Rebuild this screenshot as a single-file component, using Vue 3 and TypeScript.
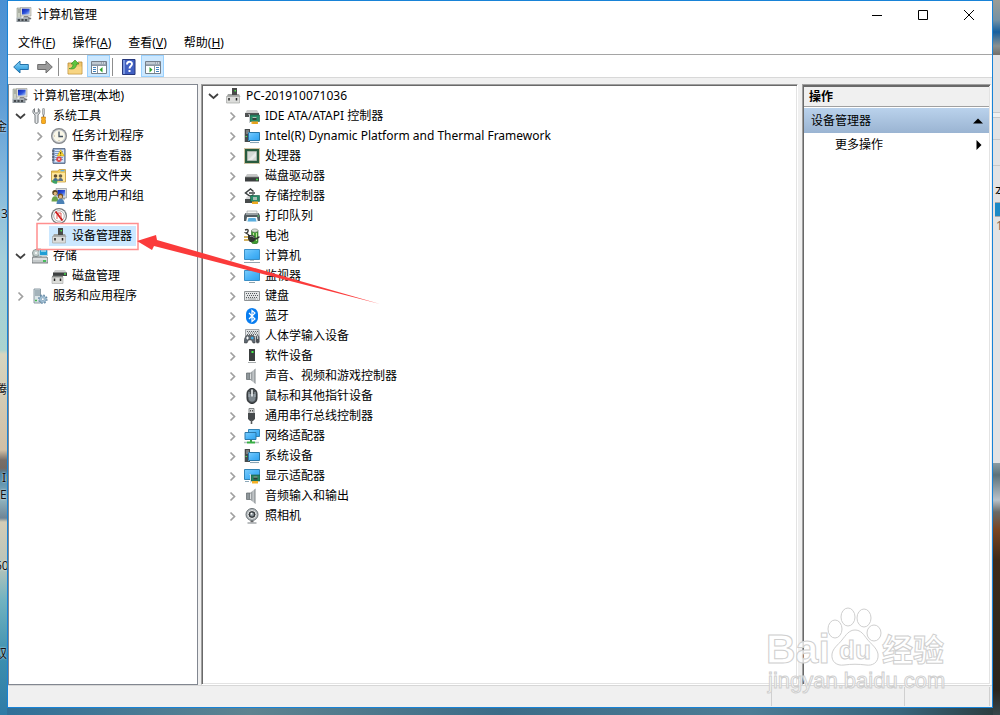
<script setup lang="ts">
interface TreeNode {
  label: string
  icon: string
  level: number
  state?: 'open' | 'closed'
  selected?: boolean
}

const menus = [
  { label: '文件', key: 'F' },
  { label: '操作', key: 'A' },
  { label: '查看', key: 'V' },
  { label: '帮助', key: 'H' },
]

const consoleTree: TreeNode[] = [
  { label: '计算机管理(本地)', icon: 'i-manage', level: 0 },
  { label: '系统工具', icon: 'i-tools', level: 1, state: 'open' },
  { label: '任务计划程序', icon: 'i-clock', level: 2, state: 'closed' },
  { label: '事件查看器', icon: 'i-event', level: 2, state: 'closed' },
  { label: '共享文件夹', icon: 'i-share', level: 2, state: 'closed' },
  { label: '本地用户和组', icon: 'i-users', level: 2, state: 'closed' },
  { label: '性能', icon: 'i-perf', level: 2, state: 'closed' },
  { label: '设备管理器', icon: 'i-device', level: 2, selected: true },
  { label: '存储', icon: 'i-storage', level: 1, state: 'open' },
  { label: '磁盘管理', icon: 'i-diskmgr', level: 2 },
  { label: '服务和应用程序', icon: 'i-services', level: 1, state: 'closed' },
]

const deviceNames: [string, string][] = [
  ['IDE ATA/ATAPI 控制器', 'i-ide'],
  ['Intel(R) Dynamic Platform and Thermal Framework', 'i-system'],
  ['处理器', 'i-cpu'],
  ['磁盘驱动器', 'i-disk'],
  ['存储控制器', 'i-storctl'],
  ['打印队列', 'i-printer'],
  ['电池', 'i-battery'],
  ['计算机', 'i-computer'],
  ['监视器', 'i-monitor'],
  ['键盘', 'i-keyboard'],
  ['蓝牙', 'i-bluetooth'],
  ['人体学输入设备', 'i-hid'],
  ['软件设备', 'i-software'],
  ['声音、视频和游戏控制器', 'i-speaker'],
  ['鼠标和其他指针设备', 'i-mouse'],
  ['通用串行总线控制器', 'i-usb'],
  ['网络适配器', 'i-network'],
  ['系统设备', 'i-system'],
  ['显示适配器', 'i-display'],
  ['音频输入和输出', 'i-speaker'],
  ['照相机', 'i-camera'],
]

const deviceTree: TreeNode[] = [
  { label: 'PC-201910071036', icon: 'i-device', level: 0, state: 'open' },
  ...deviceNames.map(([label, icon]): TreeNode => ({ label, icon, level: 1, state: 'closed' })),
]
</script>

<template>
  <div class="desktop">
    <svg class="sprite" aria-hidden="true">
      <defs>
        <linearGradient id="g-screen" x1="0" y1="0" x2="1" y2="1">
          <stop offset="0" stop-color="#7ccdfd" /><stop offset=".5" stop-color="#4db5f8" /><stop offset="1" stop-color="#2fa2ee" />
        </linearGradient>
        <linearGradient id="g-back" x1="0" y1="0" x2="0" y2="1">
          <stop offset="0" stop-color="#8fd8fb" /><stop offset="1" stop-color="#1b8fd6" />
        </linearGradient>
        <linearGradient id="g-navy" x1="0" y1="0" x2="1" y2="1">
          <stop offset="0" stop-color="#0a1fae" /><stop offset=".55" stop-color="#2f55dc" /><stop offset="1" stop-color="#b5d0fb" />
        </linearGradient>
        <linearGradient id="g-cone" x1="0" y1="0" x2="1" y2="0">
          <stop offset="0" stop-color="#777d80" /><stop offset=".6" stop-color="#c6cacc" /><stop offset="1" stop-color="#7d8386" />
        </linearGradient>
        <symbol id="i-down" viewBox="0 0 16 16"><path d="M4 6l4.500 4 4.500-4" fill="none" stroke="#404040" stroke-width="1.700" /></symbol>
        <symbol id="i-right" viewBox="0 0 16 16"><path d="M6.500 4.500l4 4-4 4" fill="none" stroke="#a0a0a0" stroke-width="1.700" /></symbol>
        <symbol id="i-manage" viewBox="0 0 16 16">
          <path d="M1 1h4v10H1z" fill="#c9cec2" stroke="#8a9088" stroke-width=".6" /><path d="M2 3h2M2 5h2" stroke="#70766c" stroke-width=".7" />
          <path d="M4.500 .5h10.500v8.500H4.500z" fill="#dcdcd5" stroke="#9a9a92" stroke-width=".6" /><path d="M6 1.700h7.600v5.800H6z" fill="url(#g-navy)" />
          <path d="M8 9h4l1 2H7z" fill="#85868a" /><path d="M.5 11h13v4H.5z" fill="#8e969c" /><path d="M.5 11h13" stroke="#c6cdd2" />
          <path d="M2 13h2M5.500 13h2M9 13h2" stroke="#2c3134" stroke-width="1.400" /><path d="M12 10l3.500 1-1 1.500-2-.5z" fill="#6d6f72" />
        </symbol>
        <symbol id="i-tools" viewBox="0 0 16 16">
          <path d="M2.500 .7C.3 2 .3 5.500 3 6.700V14c0 2 3 2 3 0V6.700C8.500 5.500 8.500 2 6.300 .7v3.500l-1 .8H3.500l-1-.8z" fill="#e2e5e7" stroke="#666c70" stroke-width=".9" />
          <path d="M10.500 1l1-1 1 1v5l-.5 1h-1l-.5-1z" fill="#c9cdd0" stroke="#777" stroke-width=".5" /><path d="M11.500 7v3" stroke="#777" stroke-width="1.300" />
          <path d="M9.500 9h4v1.500l-.5.5.5 1v3l-1 1h-2l-1-1v-3l.5-1-.5-.5z" fill="#f9ad1c" stroke="#b87410" stroke-width=".6" />
        </symbol>
        <symbol id="i-clock" viewBox="0 0 16 16">
          <circle cx="8" cy="8" r="8" fill="#85888b" /><circle cx="8" cy="8" r="6.800" fill="#c8ccd0" /><circle cx="8" cy="8" r="5.800" fill="#faf7e8" />
          <path d="M8 3.500V8.500h4" fill="none" stroke="#465463" stroke-width="1.300" /><path d="M3 8h1M8 12v1" stroke="#b8a684" stroke-width=".9" />
        </symbol>
        <symbol id="i-event" viewBox="0 0 16 16">
          <path d="M2 .7h12v14.600H2z" fill="#a9c2e6" stroke="#4d5e7c" stroke-width="1" /><path d="M4 2h9v12H4z" fill="#d9e6f8" />
          <path d="M4 3.500h8M4 5.500h8M4 7.500h8M4 9.500h8M4 11.500h8" stroke="#6f92c6" stroke-width=".9" /><path d="M1 3h2.500M1 6h2.500M1 9h2.500M1 12h2.500" stroke="#333f52" />
          <path d="M9.700 1.800l3.600 6.200H6.100z" fill="#ffdf35" stroke="#b98b13" stroke-width=".5" /><path d="M9.700 4v2.200M9.700 6.800v.7" stroke="#4a3100" stroke-width=".9" />
          <circle cx="8" cy="11.200" r="2.700" fill="#dd4447" /><path d="M7 10.200l2 2m0-2l-2 2" stroke="#fff" stroke-width=".8" />
        </symbol>
        <symbol id="i-share" viewBox="0 0 16 16">
          <path d="M.5 3H7l1-1.500h6.500V14H.5z" fill="#edc75a" stroke="#b98e28" stroke-width=".7" /><path d="M9.500 2.700h4" stroke="#58aee8" stroke-width="1.300" /><path d="M1 5h13v8.500H1z" fill="#ffe79c" />
          <circle cx="4.500" cy="8" r="1.800" fill="#65502e" /><circle cx="9.500" cy="8" r="1.800" fill="#6d6145" /><path d="M2 13c0-4 5-4 5 0z" fill="#426a91" /><path d="M7 13c0-4 5-4 5 0z" fill="#586e85" /><path d="M.5 12.500c2-1 3 1 6 0l-.5 3C4 16.500 1 15 .5 12.500z" fill="#3da266" />
        </symbol>
        <symbol id="i-users" viewBox="0 0 16 16">
          <path d="M5 .5h10.500v9.500H5z" fill="#d5d9dc" stroke="#83898d" stroke-width=".6" /><path d="M6.500 2h7.600v6H6.500z" fill="url(#g-navy)" /><path d="M9 10h5v1.500H9z" fill="#9b9fa2" />
          <circle cx="4" cy="4.800" r="2.700" fill="#54401e" /><circle cx="4.300" cy="5.500" r="1.700" fill="#dfb67b" /><path d="M.5 13.500c0-7 6.500-7 7 0z" fill="#6ba249" />
          <circle cx="9.500" cy="8" r="2.600" fill="#725020" /><circle cx="9.500" cy="8.800" r="1.700" fill="#e1b47d" /><path d="M5.500 16c0-7 8-7 8 0z" fill="#4b81b5" />
        </symbol>
        <symbol id="i-perf" viewBox="0 0 16 16">
          <circle cx="8" cy="8" r="8" fill="#74787b" /><circle cx="8" cy="8" r="6.800" fill="#fff" /><circle cx="8" cy="8" r="5.300" fill="none" stroke="#a5a5a5" stroke-width=".9" />
          <path d="M4.500 3.500L11.500 12.500" stroke="#cf1d1e" stroke-width="2" /><path d="M6 11V7M7 5h3v5" stroke="#df5d54" fill="none" />
        </symbol>
        <symbol id="i-device" viewBox="0 0 16 16">
          <path d="M7 0h5v8H7z" fill="#484a49" /><path d="M9.500 2h1.500v1.500H9.500z" fill="#4ee34f" /><path d="M3 6h11l1.500 3h-14z" fill="#a1a3a1" /><path d="M7 0h5v7H7z" fill="#484a49" /><path d="M9.500 2h1.500v1.500H9.500z" fill="#4ee34f" />
          <path d="M1.500 8.500h13v6.500h-13z" fill="#dcdddb" stroke="#a5a6a5" stroke-width=".7" /><path d="M4 10v2.500M11.500 10v2.500" stroke="#222" stroke-width="1.500" />
        </symbol>
        <symbol id="i-storage" viewBox="0 0 16 16">
          <path d="M1 4l3-3h5v9H1z" fill="#d9dedc" stroke="#868d8c" stroke-width=".7" /><circle cx="4" cy="5" r="3.500" fill="#c4cfcd" stroke="#7e8b89" stroke-width=".8" /><circle cx="4" cy="5" r="1" fill="#fff" />
          <path d="M7 1h9v7H7z" fill="#b9d4df" /><path d="M8 2h7v5H8z" fill="#209ed5" /><path d="M9 2h5v2H9z" fill="#7ed0ed" />
          <path d="M1 9h14l1 2v4H0v-4z" fill="#c4c9ca" stroke="#666b6c" stroke-width=".8" /><path d="M1 11h14" stroke="#f4f5f5" /><path d="M11 13h3" stroke="#29ba3f" stroke-width="1.600" />
        </symbol>
        <symbol id="i-diskmgr" viewBox="0 0 16 16">
          <path d="M4 2h10l2 3H2z" fill="#cfd0d0" /><path d="M2 4.500h14V8H2z" fill="#3e4141" /><path d="M13 6h2" stroke="#45d84a" stroke-width="1.300" /><path d="M1 9h11v6.500H1z" fill="#dcddd9" stroke="#a5a5a5" stroke-width=".6" /><path d="M1 8.500h11" stroke="#858885" stroke-width="1.500" /><path d="M3.500 10.500V13M9.500 10.500V13" stroke="#222" stroke-width="1.500" />
        </symbol>
        <symbol id="i-services" viewBox="0 0 16 16">
          <path d="M2 1h6.500v14H2z" fill="#dbe4e8" stroke="#7f909a" stroke-width=".9" /><path d="M3 3h5M3 5h5M3 7h5" stroke="#6c818c" /><path d="M3 12.500h2" stroke="#42b74b" stroke-width="1.400" />
          <circle cx="10.800" cy="11.200" r="4" fill="none" stroke="#668ca8" stroke-width="1.600" stroke-dasharray="1.600 1.540" /><circle cx="10.800" cy="11.200" r="3.300" fill="#a9c6d9" stroke="#668ca8" stroke-width=".6" /><circle cx="10.800" cy="11.200" r="1.400" fill="#fff" stroke="#668ca8" stroke-width=".6" />
        </symbol>
        <symbol id="i-ide" viewBox="0 0 16 16">
          <path d="M3 2h10l2 3.500H1z" fill="#cdcece" /><path d="M1 5h14v4H1z" fill="#505353" />
          <path d="M6 7h9.500v6.500H6z" fill="#288c68" stroke="#15593e" stroke-width=".6" /><path d="M8.500 9h4v3h-4z" fill="#35443e" /><path d="M8.500 9h4v1h-4z" fill="#a7c6b4" /><path d="M7.500 13.500H14V16H7.500z" fill="#f3ae24" /><path d="M10 14v2M12 14v2" stroke="#b87b12" stroke-width=".5" /><path d="M4.500 6.500h1V15" stroke="#c8ced0" fill="none" />
        </symbol>
        <symbol id="i-system" viewBox="0 0 16 16">
          <path d="M.7 1H6v13H.7z" fill="#464b4c" /><path d="M2 3h3M2 5h3" stroke="#b8bdc0" stroke-width=".9" /><path d="M1.500 8.500H3" stroke="#53df59" /><path d="M4 4h12v9H4z" fill="#f2f6f8" /><path d="M4.500 4.500h11v8h-11z" fill="url(#g-screen)" stroke="#2876a6" /><path d="M6 14.500h9" stroke="#8aa5b4" stroke-width="1.100" />
        </symbol>
        <symbol id="i-cpu" viewBox="0 0 16 16">
          <path d="M.5 .5h15v15H.5z" fill="none" stroke="#9e8742" stroke-width="1" stroke-dasharray="1 1" /><path d="M1 1h14v14H1z" fill="#285b3e" /><path d="M3.500 3.500h9v9h-9z" fill="#d5d9d6" stroke="#a9b5ac" /><path d="M4 12L12 4v4l-4 4z" fill="#eaecea" />
        </symbol>
        <symbol id="i-disk" viewBox="0 0 16 16"><path d="M3 6h10l2 3.500H1z" fill="#c7c8c8" /><path d="M1 9h14v4.500H1z" fill="#3c3f40" /><path d="M1 9h14" stroke="#8b8e8e" stroke-width=".7" /><path d="M12 11.500h2" stroke="#3eda44" stroke-width="1.500" /></symbol>
        <symbol id="i-storctl" viewBox="0 0 16 16">
          <path d="M9.500 3.500L6.500 1 1.500 5l5 3.500 3-2M5 5h6" fill="none" stroke="#3b4041" stroke-width="1.500" /><path d="M3 8.500h7l2 3H1z" fill="#d3d5d5" /><path d="M1 11h9v4H1z" fill="#484c4c" />
          <path d="M6.500 7.500h9v6h-9z" fill="#278b68" stroke="#16553e" stroke-width=".6" /><path d="M9 9h4v3H9z" fill="#a6bfb3" /><path d="M8 13.500h6V16H8z" fill="#efab22" />
        </symbol>
        <symbol id="i-printer" viewBox="0 0 16 16"><path d="M3 3h10v3H3z" fill="#f4f4f2" stroke="#949a9b" stroke-width=".6" /><path d="M1.500 5h13L16 7.500V13H0V7.500z" fill="#535c60" /><path d="M2 6h12" stroke="#c1c8ca" stroke-width="1.300" /><path d="M3 9h10l1 5H2z" fill="#f2f8fa" /><path d="M4.500 10h7l1 3.500h-9z" fill="#5aaede" /><path d="M13.500 8H15" stroke="#52db61" /></symbol>
        <symbol id="i-battery" viewBox="0 0 16 16">
          <path d="M7.500 2.500H14V14c0 2.500-6.500 2.500-6.500 0z" fill="#3f9c31" stroke="#2a6426" stroke-width=".6" /><ellipse cx="10.800" cy="2.600" rx="3.200" ry="1.700" fill="#d6dfd3" stroke="#747b70" stroke-width=".6" /><path d="M9.500 5v3M12.500 5v8" stroke="#bfe79b" stroke-width="1.100" />
          <path d="M1 2c5-2 3 3 1 3l3 2" fill="none" stroke="#40403e" stroke-width="1.400" /><path d="M4 7h3.500c5 0 5 7 0 7H6l-2-2z" fill="#303432" /><path d="M6 8.500c3-1 4 .5 4 1.500" stroke="#aab0ac" fill="none" stroke-width=".8" /><path d="M0 9h4M0 12h4.500" stroke="#c5992d" stroke-width="1.300" /><path d="M10.500 11c3 0 3-2 5-2" stroke="#303432" stroke-width="1.600" fill="none" />
        </symbol>
        <symbol id="i-computer" viewBox="0 0 16 16"><path d="M.5 1.500h15v10H.5z" fill="url(#g-screen)" stroke="#3a8fc6" /><path d="M6 12h4v1H6z" fill="#bbc5ca" /><path d="M0 14.500h16" stroke="#93a5b0" /></symbol>
        <symbol id="i-monitor" viewBox="0 0 16 16"><path d="M.5 2.500h15v10H.5z" fill="url(#g-screen)" stroke="#3a8fc6" /><path d="M5 14.500h6" stroke="#8ea3ad" /></symbol>
        <symbol id="i-keyboard" viewBox="0 0 16 16"><path d="M.5 3.500h15v9H.5z" fill="#e4e6e7" stroke="#8e9294" /><path d="M2 5.500h12M2 9.500h12" stroke="#555a5e" stroke-dasharray="1 1" /><path d="M3 7.500h11" stroke="#555a5e" stroke-dasharray="1 1" /><path d="M2 11h1m1 0h8m1 0h1" stroke="#8a9093" stroke-width=".8" /></symbol>
        <symbol id="i-bluetooth" viewBox="0 0 16 16"><rect x="2" width="12" height="16" rx="6" fill="#087df0" /><path d="M5 5l6 6L8 13.500v-11L11 5l-6 6" fill="none" stroke="#fff" stroke-width="1.200" /></symbol>
        <symbol id="i-hid" viewBox="0 0 16 16">
          <path d="M1.500 1.500h13.500v7H1.500z" fill="#e0e3e5" stroke="#8d9194" stroke-width=".8" /><path d="M3 3.500h11M3 6.500h11" stroke="#606569" stroke-dasharray="1 1" /><path d="M4 5h9" stroke="#606569" stroke-dasharray="1 1" />
          <path d="M2.500 7.500h7c2 2 2.500 6 1.500 7.500H9L7.500 12h-3L3 15H.5c-1-1.500 0-5.500 2-7.500z" fill="#5d6770" stroke="#333" stroke-width=".5" /><path d="M3.500 8.500v3M2 10h3" stroke="#fff" stroke-width=".9" /><circle cx="8.300" cy="10" r="1.300" fill="#42afea" /><rect x="11.500" y="7" width="4.300" height="8.500" rx="2" fill="#4c5156" stroke="#fff" stroke-width=".5" /><path d="M13.700 8v3" stroke="#fff" stroke-width=".8" />
        </symbol>
        <symbol id="i-software" viewBox="0 0 16 16"><path d="M5 1h6v12H5z" fill="#3a3e3e" /><path d="M7.500 3h2v2h-2z" fill="#47ef4a" /><path d="M4 14.500h8" stroke="#a8adae" /></symbol>
        <symbol id="i-speaker" viewBox="0 0 16 16"><path d="M2.500 5H6v6.500H2.500z" fill="#8e969a" stroke="#5f6669" stroke-width=".7" /><path d="M6 5l5.500-4.500v15.500L6 11.500z" fill="url(#g-cone)" /><path d="M6.500 5.500v5.500" stroke="#f2f4f5" stroke-width=".8" /></symbol>
        <symbol id="i-mouse" viewBox="0 0 16 16"><rect x="3" y=".5" width="10" height="15" rx="5" fill="#484e52" stroke="#25292c" /><path d="M4.500 6v4c0 5 7 5 7 0V6z" fill="#7c868d" /><path d="M8 1.500v7" stroke="#f2f5f7" stroke-width="1.600" /><path d="M5 4v5M11 4v5" stroke="#b7c1c7" stroke-width=".9" /></symbol>
        <symbol id="i-usb" viewBox="0 0 16 16"><path d="M5 .5h5v5H5z" fill="#d6d8d8" stroke="#828687" /><path d="M6.500 2v1.500M8.500 2v1.500" stroke="#444" stroke-width=".9" /><path d="M4 5h7v6l-2 2H6l-2-2z" fill="#464a4c" /><path d="M7.500 12v4" stroke="#55595a" stroke-width="1.600" /></symbol>
        <symbol id="i-network" viewBox="0 0 16 16"><path d="M4.500 1.500h11v7h-11z" fill="url(#g-screen)" stroke="#3284b6" /><path d="M1 4.500h11v7H1z" fill="url(#g-screen)" stroke="#2c78aa" /><path d="M6 12h2v2H6z" fill="#389b42" /><path d="M3 14.500h8" stroke="#36af43" stroke-width="2" /><path d="M0 14.500h3M11 14.500h4" stroke="#b7c2c4" stroke-width="1.300" /></symbol>
        <symbol id="i-display" viewBox="0 0 16 16"><path d="M.5 1.500h15v10H.5z" fill="url(#g-screen)" stroke="#3284b6" /><path d="M7 7h9v6H7z" fill="#258762" stroke="#174f3b" stroke-width=".6" /><path d="M9.500 8.500h4v3h-4z" fill="#2b3f37" /><path d="M9.500 8.500h4v1h-4z" fill="#9cbfab" /><path d="M8 13h6v2.500H8z" fill="#f4b025" /><path d="M5.500 6.500h1V15" stroke="#d7dde0" fill="none" /><path d="M1 13.500h4" stroke="#8da8b8" /></symbol>
        <symbol id="i-camera" viewBox="0 0 16 16"><circle cx="8" cy="6.500" r="6" fill="#b4babd" stroke="#687074" /><circle cx="8" cy="6.500" r="4" fill="#353a3d" stroke="#eceeee" /><circle cx="8" cy="6.500" r="2" fill="#8c969c" /><circle cx="7.500" cy="5.700" r=".9" fill="#fff" /><path d="M6.500 13h3v1.500h-3z" fill="#666" /><path d="M3.500 15h9" stroke="#a4a9ab" stroke-width="1.500" /></symbol>
        <symbol id="t-back" viewBox="0 0 16 16"><path d="M.7 8l6.300-6v3.500h8.300v5H7V14z" fill="url(#g-back)" stroke="#2572a8" stroke-linejoin="round" /></symbol>
        <symbol id="t-forward" viewBox="0 0 16 16"><path d="M15.300 8L9 2v3.500H.7v5H9V14z" fill="#9b9b9b" stroke="#6d6d6d" stroke-linejoin="round" /></symbol>
        <symbol id="t-up" viewBox="0 0 16 16"><path d="M1 4h5l1 1h4V3h4v12H1z" fill="#efc66d" stroke="#b98a34" stroke-width=".8" /><path d="M1.500 7.500h13V14.500h-13z" fill="#f7d583" /><path d="M2 9.500c3 0 4-2 4-4.500H4l4-4 4 4h-2.500c0 4-3 6-7.500 4.500z" fill="#5ec63f" stroke="#318620" stroke-width=".6" /></symbol>
        <symbol id="t-left-pane" viewBox="0 0 16 16"><path d="M.5 2.500h15v12H.5z" fill="#fff" stroke="#747f8b" /><path d="M1 3h14v3H1z" fill="#9aa6b3" /><path d="M1 4h9" stroke="#e6ebef" /><path d="M11 4h1m1 0h1" stroke="#fff" /><path d="M1 6.500h14M6.500 7v7" stroke="#8b96a2" /><path d="M2 8.500h3M2 10.500h3M2 12.500h3" stroke="#4081bd" /><path d="M11.500 8v5.500L8.500 10.700z" fill="#29a329" /></symbol>
        <symbol id="t-right-pane" viewBox="0 0 16 16"><path d="M.5 2.500h15v12H.5z" fill="#fff" stroke="#747f8b" /><path d="M1 3h14v3H1z" fill="#9aa6b3" /><path d="M1 4h9" stroke="#e6ebef" /><path d="M11 4h1m1 0h1" stroke="#fff" /><path d="M1 6.500h14M9.500 7v7" stroke="#8b96a2" /><path d="M11 8.500h3M11 10.500h3M11 12.500h3" stroke="#4081bd" /><path d="M4.500 8v5.500l3-2.800z" fill="#29a329" /></symbol>
        <symbol id="t-help" viewBox="0 0 16 16"><path d="M1.500 .5h12.500v15H1.500z" fill="#4160c2" stroke="#26377c" /><path d="M2 1h2v14H2z" fill="#7896df" /><path d="M6 5.500c0-3.500 5-3.500 5-.5 0 2-2.500 2-2.500 4.500" fill="none" stroke="#fff" stroke-width="1.900" /><path d="M7.500 11h2v2h-2z" fill="#fff" /></symbol>
      </defs>
    </svg>

    <div class="strip-left">
      <span class="frag f1">金</span><span class="frag f2">3</span><span class="frag f3">腾</span>
      <span class="frag f4">In</span><span class="frag f5">E</span><span class="frag f6">60</span><span class="frag f7">双</span>
    </div>
    <div class="strip-right">
      <div class="behind"><span class="b-text">本</span><i class="b-block"></i><span class="b-num">1</span></div>
    </div>

    <main class="window">
      <header class="titlebar">
        <svg class="icon"><use href="#i-manage" /></svg>
        <h1>计算机管理</h1>
        <div class="caption">
          <button aria-label="最小化"><svg viewBox="0 0 12 12"><path d="M1 6.500h10" /></svg></button>
          <button aria-label="最大化"><svg viewBox="0 0 12 12"><path d="M1.500 1.500h9v9h-9z" /></svg></button>
          <button aria-label="关闭"><svg viewBox="0 0 12 12"><path d="M1 1l10 10M11 1L1 11" /></svg></button>
        </div>
      </header>

      <nav class="menubar">
        <button v-for="m in menus" :key="m.key">{{ m.label }}(<u>{{ m.key }}</u>)</button>
      </nav>

      <div class="toolbar">
        <button aria-label="后退"><svg class="icon"><use href="#t-back" /></svg></button>
        <button aria-label="前进"><svg class="icon"><use href="#t-forward" /></svg></button>
        <i class="sep"></i>
        <button aria-label="向上一级"><svg class="icon"><use href="#t-up" /></svg></button>
        <button class="on" aria-label="显示控制台树"><svg class="icon"><use href="#t-left-pane" /></svg></button>
        <i class="sep"></i>
        <button aria-label="帮助"><svg class="icon"><use href="#t-help" /></svg></button>
        <button class="on" aria-label="显示操作窗格"><svg class="icon"><use href="#t-right-pane" /></svg></button>
      </div>

      <section class="panes">
        <ul class="pane tree console">
          <li v-for="n in consoleTree" :key="n.label" :class="['row', 'level-' + n.level, { leaf: !n.state }]">
            <button v-if="n.state" class="chevron" :aria-label="n.label">
              <svg class="icon"><use :href="n.state === 'open' ? '#i-down' : '#i-right'" /></svg>
            </button>
            <span :class="['item', { selected: n.selected }]">
              <svg class="icon"><use :href="'#' + n.icon" /></svg><span class="label">{{ n.label }}</span>
            </span>
          </li>
        </ul>

        <ul class="pane sunken tree devices">
          <li v-for="n in deviceTree" :key="n.label" :class="['row', 'level-' + n.level]">
            <button class="chevron" :aria-label="n.label">
              <svg class="icon"><use :href="n.state === 'open' ? '#i-down' : '#i-right'" /></svg>
            </button>
            <span class="item">
              <svg class="icon"><use :href="'#' + n.icon" /></svg><span class="label">{{ n.label }}</span>
            </span>
          </li>
        </ul>

        <aside class="pane sunken actions">
          <h2>操作</h2>
          <button class="group">设备管理器<svg viewBox="0 0 10 6"><path d="M0 5.500L5 .5l5 5z" /></svg></button>
          <button class="more">更多操作<svg viewBox="0 0 6 10"><path d="M.5 0l5 5-5 5z" /></svg></button>
        </aside>
      </section>

      <footer class="statusbar"><span></span><span></span><span></span></footer>

      <svg class="callout" width="400" height="320" aria-hidden="true">
        <path d="M30 223.500h101v26H30z" fill="none" stroke="#ff8f8f" stroke-width="1.500" />
        <path d="M130 241l19-6 1 5 223 64-226-58-2 4z" fill="#fb3b3b" />
      </svg>
    </main>

    <svg class="watermark" width="190" height="96" aria-hidden="true">
      <g class="outline">
        <text x="6" y="57" class="big">Bai</text>
        <ellipse cx="75" cy="23" rx="7" ry="9" /><ellipse cx="88" cy="11" rx="7" ry="9" /><ellipse cx="104" cy="12" rx="7" ry="9" /><ellipse cx="114" cy="27" rx="7" ry="8" />
        <path d="M95 24c6 0 9 5 12 9 4 5 10 9 11 15 1 9-6 12-12 11-8-1-14-1-22 0-7 1-13-3-12-11 1-6 6-9 10-14 4-5 7-10 13-10z" />
        <text x="79" y="53" class="du">du</text>
        <text x="122" y="55" class="cjk">经验</text>
        <text x="8" y="82" class="site">jingyan.baidu.com</text>
      </g>
    </svg>
  </div>
</template>

<style>
html, body { margin: 0; }
</style>

<style scoped>
* { box-sizing: border-box; }
.desktop {
  position: relative;
  min-height: 100vh;
  padding: 0 7px 7px;
  display: flex;
  overflow: hidden;
  background: linear-gradient(90deg, #2f6f99, #5e8390 25%, #3c6c88 50%, #4d7c95 75%, #38657c 90%, #2c3b3d);
  font: 12px/20px "Noto Sans", "Noto Sans CJK SC", sans-serif;
  color: #000;
}
.sprite { position: absolute; width: 0; height: 0; }
.strip-left, .strip-right { position: absolute; top: 0; bottom: 0; width: 7px; overflow: hidden; }
.strip-left {
  left: 0;
  background: linear-gradient(#4a90d3, #5f9dd6 100px, #86b9dc 180px, #a5cfda 260px, #a9d3cf 350px, #d6d5bf 354px, #d0bfa6 450px, #796f68 460px, #756a63 468px, #4b86a8 474px, #8fb2bd 500px, #6f8596 518px, #d3ccb6 522px, #b9c4b9 565px, #72b3c0 600px, #3c8eae 660px, #2f7ba6 715px);
}
.strip-right {
  right: 0;
  background: linear-gradient(#9c9d95, #7592a4 20px, #155f9e 32px, #8a9190 46px, #716e69 55px, #8b9da4 463px, #5c727a 475px, #b9c2ca 500px, #6a6a67 512px, #7a4420 530px, #402a18 560px, #33291b 620px, #2b251e 690px, #37474c 715px);
}
.frag { position: absolute; left: -5px; color: #111; text-shadow: 0 0 2px #fff; white-space: nowrap; }
.f1 { top: 117px; } .f2 { top: 204px; left: 1px; } .f3 { top: 380px; } .f4 { top: 468px; left: 2px; } .f5 { top: 485px; left: 0; } .f6 { top: 556px; } .f7 { top: 644px; }
.behind {
  position: absolute; top: 55px; left: 0; right: 0; height: 408px;
  background: linear-gradient(#e3e3e4 57px, #c9c9ca 57px 58px, #f0f0f0 58px 62px, #c9c9ca 62px 63px, #e3e3e4 63px 84px, #c9c9ca 84px 85px, #e3e3e4 85px 110px, #c9c9ca 110px 111px, #e3e3e4 111px);
}
.b-text { position: absolute; left: 2px; top: 126px; }
.b-block { position: absolute; left: 2px; right: 0; top: 147px; height: 15px; background: #1d8ac6; border: solid #aaa; border-width: 1px 0; }
.b-num { position: absolute; left: 3px; top: 161px; color: #8c684f; }

.window {
  position: relative; flex: 1; min-width: 0;
  display: flex; flex-direction: column;
  background: #f0f0f0; border: 1px solid #1883d7;
}
button { font: inherit; color: inherit; background: none; border: 0; padding: 0; margin: 0; }
.icon { display: block; width: 16px; height: 16px; flex: none; }
.titlebar { display: flex; align-items: center; height: 28px; padding-left: 8px; background: #fff; }
.titlebar h1 { flex: 1; margin: 0 0 0 5px; font-size: 12px; font-weight: 400; }
.caption { display: flex; }
.caption button { width: 46px; height: 28px; display: grid; place-items: center; }
.caption svg { width: 12px; height: 12px; fill: none; stroke: #000; }
.menubar { display: flex; gap: 17px; height: 26px; padding: 4px 10px 1px; background: #fff; border-bottom: 1px solid #a5a5a5; }
.toolbar { display: flex; gap: 1px; height: 23px; padding-left: 1px; background: #fff; border-bottom: 1px solid #d8d8d8; }
.toolbar button { width: 23px; height: 22px; display: grid; place-items: center; padding-top: 2px; }
.toolbar .on { background: #cce8ff; border: 1px solid #99d1ff; }
.toolbar .sep { width: 1px; margin: 3px 3px 1px 1px; background: #8d8d8d; }

.panes { flex: 1; display: grid; grid-template-columns: 190px minmax(0, 1fr) 189px; column-gap: 4px; padding: 6px 1px 0 0; }
.pane { margin: 0; background: #fff; min-width: 0; }
.console { border: 1px solid #828790; }
.devices { margin-left: -1px; }
.sunken { border: 1px solid; border-color: #a0a0a0 #fff #fff #a0a0a0; box-shadow: inset 1px 1px #696969, inset -1px -1px #e3e3e3; }
.tree { list-style: none; padding: 1px; }
.row { display: flex; align-items: center; height: 20px; white-space: nowrap; }
.chevron { width: 16px; height: 16px; margin-right: 2px; }
.item { display: flex; align-items: center; gap: 5px; height: 20px; padding: 0 4px 0 2px; }
.selected { background: #cce8ff; }
.label { padding-bottom: 1px; }
.console .level-1 { padding-left: 2px; }
.console .level-2 { padding-left: 21px; }
.console .level-2.leaf { padding-left: 39px; }
.devices .level-0 { padding-left: 2px; }
.devices .level-1 { padding-left: 21px; }

.actions { display: flex; flex-direction: column; padding: 1px; }
.actions h2 { margin: 0 0 1px; padding: 0 5px; height: 21px; font-size: 12px; line-height: 20px; background: #f0f0f0; border-top: 1px solid #696969; border-bottom: 1px solid #a0a0a0; }
.actions button { display: flex; align-items: center; justify-content: space-between; text-align: left; }
.group { height: 25px; padding: 0 6px 0 7px; background: linear-gradient(#bad2ec, #9ab4d2); }
.group svg { width: 10px; height: 6px; }
.more { height: 24px; padding: 0 7px 0 31px; }
.more svg { width: 6px; height: 10px; }

.statusbar { display: flex; justify-content: flex-end; height: 22px; border-top: 1px solid #d7d7d7; padding: 1px 2px; }
.statusbar span { border-right: 1px solid #d0d0d0; }
.statusbar span:nth-child(1) { flex: 1; }
.statusbar span:nth-child(2) { width: 133px; }
.statusbar span:nth-child(3) { width: 85px; }

.callout { position: absolute; left: -1px; top: -1px; pointer-events: none; }
.watermark { position: absolute; right: 50px; bottom: 13px; pointer-events: none; }
.outline { fill: #fff; fill-opacity: .75; stroke: #cfcfcf; stroke-width: 1; }
.outline text { font-family: "Liberation Sans", "Noto Sans CJK SC", sans-serif; }
.big { font-size: 41px; font-weight: 700; }
.du { font-size: 26px; font-weight: 700; }
.outline .cjk { font-family: "Noto Sans CJK SC", sans-serif; font-size: 31px; font-weight: 700; }
.site { font-size: 22px; }
</style>
